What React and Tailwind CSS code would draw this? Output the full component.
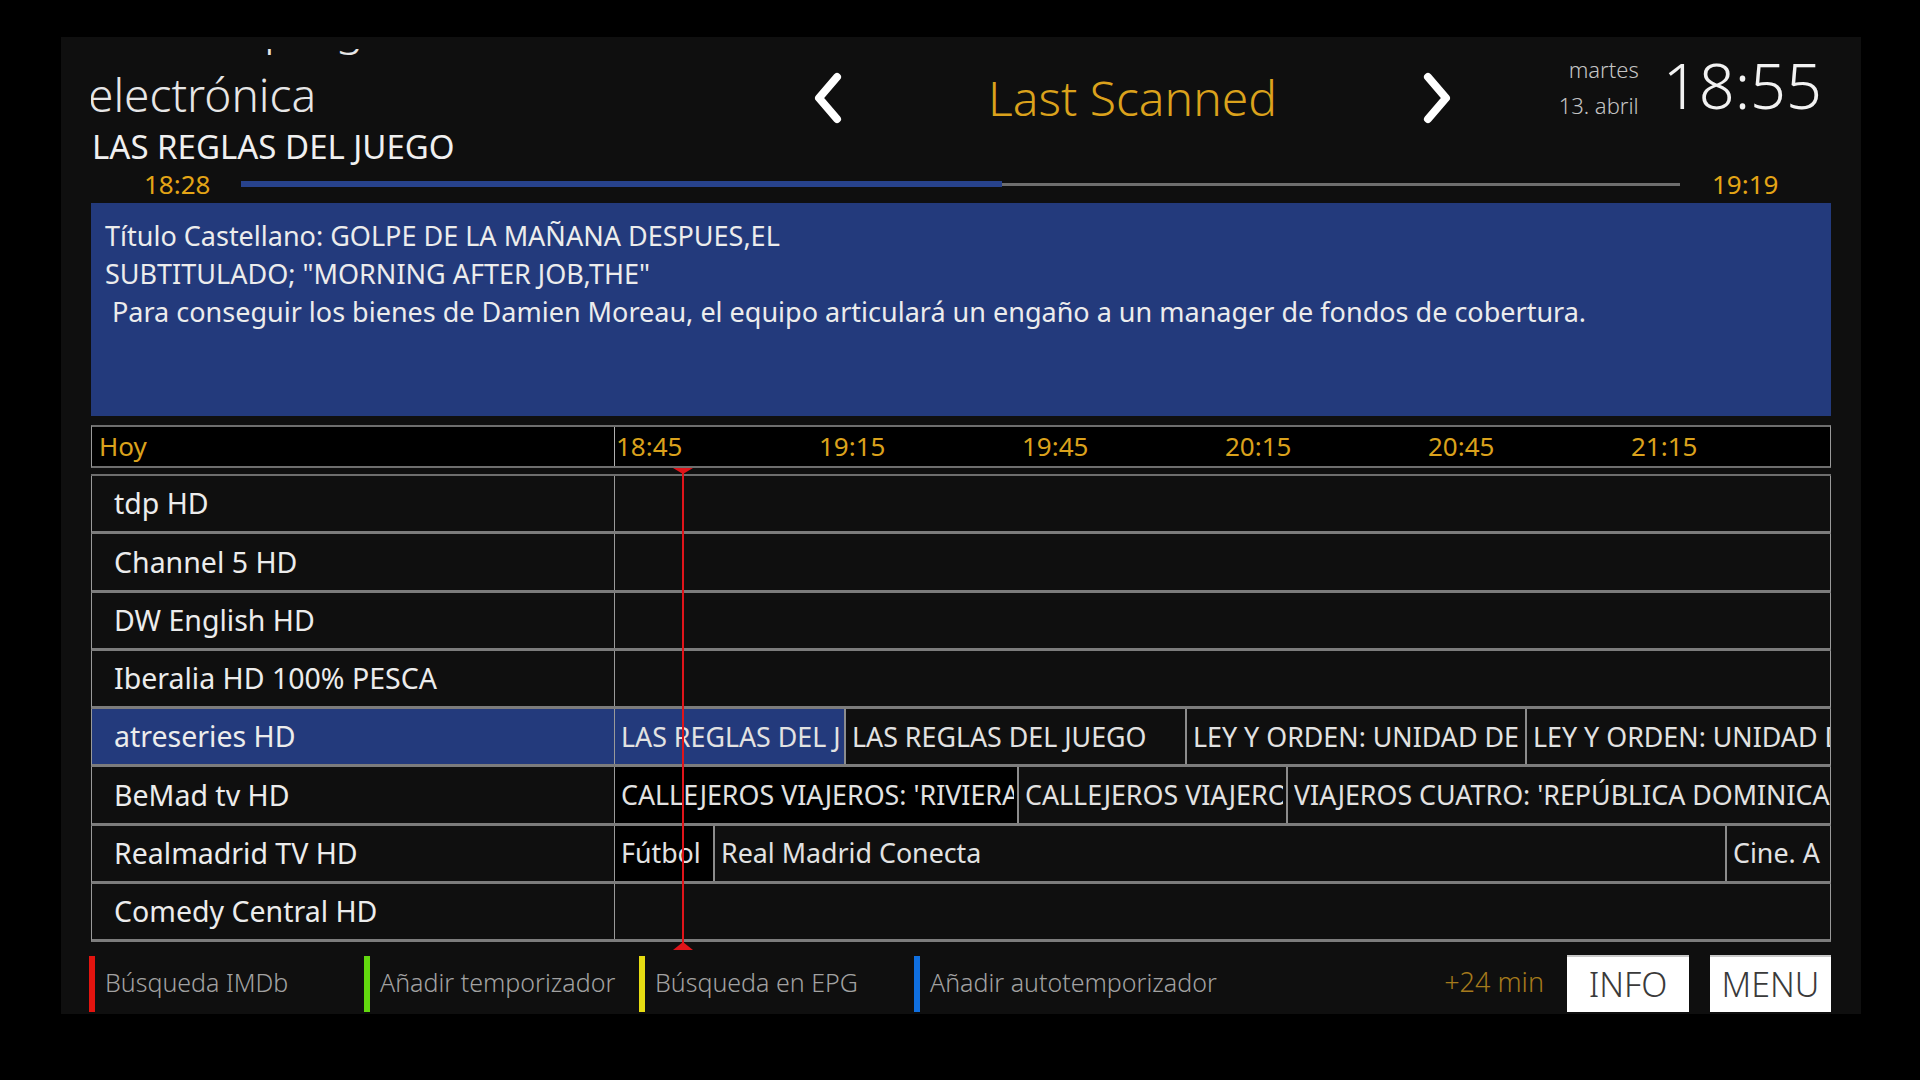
import React from 'react';

// EPG grid scale: 30 minutes per 203px column
const PX_PER_MIN = 203 / 30;

const slots = ['18:45', '19:15', '19:45', '20:15', '20:45', '21:15'];

const channels = [
  { name: 'tdp HD', programs: [] },
  { name: 'Channel 5 HD', programs: [] },
  { name: 'DW English HD', programs: [] },
  { name: 'Iberalia HD 100% PESCA', programs: [] },
  {
    name: 'atreseries HD',
    selected: true,
    programs: [
      { title: 'LAS REGLAS DEL JUEGO', min: 34.1, selected: true },
      { title: 'LAS REGLAS DEL JUEGO', min: 50.4 },
      { title: 'LEY Y ORDEN: UNIDAD DE VÍCTIMAS ESPECIALES', min: 50.2 },
      { title: 'LEY Y ORDEN: UNIDAD DE VÍCTIMAS ESPECIALES' },
    ],
  },
  {
    name: 'BeMad tv HD',
    programs: [
      { title: "CALLEJEROS VIAJEROS: 'RIVIERA MAYA'", min: 59.7, now: true },
      { title: 'CALLEJEROS VIAJEROS', min: 39.8 },
      { title: "VIAJEROS CUATRO: 'REPÚBLICA DOMINICANA'" },
    ],
  },
  {
    name: 'Realmadrid TV HD',
    programs: [
      { title: 'Fútbol', min: 14.8, now: true },
      { title: 'Real Madrid Conecta', min: 149.6 },
      { title: 'Cine. A' },
    ],
  },
  { name: 'Comedy Central HD', programs: [] },
];

const keys = [
  { color: 'bg-[#e3140f]', label: 'Búsqueda IMDb' },
  { color: 'bg-[#62d80e]', label: 'Añadir temporizador' },
  { color: 'bg-[#e6dc12]', label: 'Búsqueda en EPG' },
  { color: 'bg-[#0f6fe0]', label: 'Añadir autotemporizador' },
];

const Chevron = ({ dir }) => (
  <svg width="34" height="54" viewBox="0 0 34 54">
    <polyline
      points={dir === 'left' ? '26,6 8,27 26,48' : '8,6 26,27 8,48'}
      fill="none"
      stroke="#ffffff"
      strokeWidth="8"
      strokeLinecap="round"
      strokeLinejoin="round"
    />
  </svg>
);

const ProgramCell = ({ p }) => {
  const bg = p.selected ? 'bg-[#233a7c]' : p.now ? 'bg-black' : 'bg-[#0f0f0f]';
  return (
    <div
      className={`${bg} h-full shrink-0 border-r-2 border-[#8c8c8c] pl-[6px] pr-[3px] flex items-center last:flex-1 last:border-r-0 last:pr-[7px]`}
      style={p.min ? { width: Math.round(p.min * PX_PER_MIN) } : undefined}
    >
      <span className="block w-full overflow-hidden whitespace-nowrap text-[26.8px] text-[#e2e2e2]">{p.title}</span>
    </div>
  );
};

const ChannelRow = ({ ch }) => (
  <div className="h-[58.3px] flex border-b-[3px] border-[#7c7c7c] border-l border-l-[#9a9a9a] border-r border-r-[#9a9a9a]">
    <div
      className={`w-[523px] shrink-0 flex items-center pl-[22px] text-[28.5px] text-[#ececec] border-r border-[#9a9a9a] ${
        ch.selected ? 'bg-[#233a7c]' : 'bg-[#0f0f0f]'
      }`}
    >
      {ch.name}
    </div>
    <div className="flex-1 min-w-0 flex bg-[#0f0f0f] overflow-hidden">
      {ch.programs.map((p, i) => (
        <ProgramCell key={i} p={p} />
      ))}
    </div>
  </div>
);

export default function App() {
  return (
    <div className="w-full h-[1080px] bg-black pt-[37px] pl-[61px] font-['Noto_Sans','Open_Sans',sans-serif]">
      <div className="w-[1800px] h-[977px] bg-[#0f0f0f] px-[30px] flex flex-col">
        {/* title / navigation / clock */}
        <div className="h-[91px] flex items-start">
          <div className="w-[720px] shrink-0 mt-[12px] h-[79px] overflow-hidden flex flex-col justify-end pb-[8px] font-light text-[46px] text-[#e6e6e6]">
            <div className="leading-[84px] whitespace-nowrap">Guía de programación</div>
            <div className="leading-[52px] whitespace-nowrap -ml-[3px]">electrónica</div>
          </div>
          <div className="mt-[34px] shrink-0">
            <Chevron dir="left" />
          </div>
          <div className="w-[575px] shrink-0 mt-[37px] text-center text-[48px] leading-none font-light text-[#dba21c]">
            Last Scanned
          </div>
          <div className="mt-[34px] shrink-0">
            <Chevron dir="right" />
          </div>
          <div className="flex-1 flex justify-end items-start pr-[9px]">
            <div className="mt-[14px] flex flex-col items-end text-[22px] font-light text-[#c4c4c4] leading-[36px]">
              <span>martes</span>
              <span>13. abril</span>
            </div>
            <div className="ml-[24px] mt-[16px] text-[63px] leading-none font-light text-[#f2f2f2]">18:55</div>
          </div>
        </div>

        <div className="h-[37px] flex items-center text-[33px] leading-none text-[#f0f0f0] pl-[1px]">
          LAS REGLAS DEL JUEGO
        </div>

        {/* progress of current event */}
        <div className="h-[38px] flex items-center">
          <span className="w-[150px] shrink-0 pl-[53px] text-[26px] leading-none text-[#e4a516]">18:28</span>
          <div className="w-[1439px] shrink-0 flex items-center">
            <div className="w-[761px] h-[6px] bg-[#27428c]" />
            <div className="flex-1 h-[3px] bg-[#6e6e6e]" />
          </div>
          <span className="ml-[32px] text-[26px] leading-none text-[#e4a516]">19:19</span>
        </div>

        {/* event description */}
        <div className="h-[213px] bg-[#233a7c] px-[14px] pt-[14px] text-[27px] leading-[38px] text-[#ececec] whitespace-pre">
          <div>Título Castellano: GOLPE DE LA MAÑANA DESPUES,EL</div>
          <div>SUBTITULADO; "MORNING AFTER JOB,THE"</div>
          <div> Para conseguir los bienes de Damien Moreau, el equipo articulará un engaño a un manager de fondos de cobertura.</div>
        </div>

        {/* timeline + channels */}
        <div className="relative mt-[9px]">
          <div className="h-[43px] flex bg-black border-y-2 border-[#6e6e6e] border-l border-l-[#9a9a9a] border-r border-r-[#9a9a9a] text-[26px] text-[#dba21c]">
            <div className="w-[523px] shrink-0 pl-[7px] flex items-center border-r border-[#b0b0b0]">Hoy</div>
            <div className="flex-1 min-w-0 flex overflow-hidden">
              {slots.map((s) => (
                <div key={s} className="w-[203px] shrink-0 pl-[1px] flex items-center">
                  {s}
                </div>
              ))}
            </div>
          </div>

          <div className="mt-[6px] border-t-2 border-[#6e6e6e]">
            {channels.map((ch) => (
              <ChannelRow key={ch.name} ch={ch} />
            ))}
          </div>

          {/* now marker */}
          <div className="absolute left-[591px] top-[43px] h-[477px] w-[2px] bg-[#e0141a]" />
          <div className="absolute left-[582px] top-[43px] w-0 h-0 border-l-[10px] border-r-[10px] border-t-[6px] border-l-transparent border-r-transparent border-t-[#e0141a]" />
          <div className="absolute left-[582px] top-[517px] w-0 h-0 border-l-[10px] border-r-[10px] border-b-[8px] border-l-transparent border-r-transparent border-b-[#e0141a]" />
        </div>

        {/* colour keys */}
        <div className="mt-[14px] h-[56px] flex items-stretch -ml-[2px]">
          {keys.map((k) => (
            <div key={k.label} className="w-[275px] shrink-0 flex items-stretch">
              <div className={`w-[6px] shrink-0 ${k.color}`} />
              <span className="ml-[10px] pb-[4px] flex items-center text-[25px] font-light text-[#a2a2a2] whitespace-nowrap">
                {k.label}
              </span>
            </div>
          ))}
          <div className="flex-1 flex items-center justify-end">
            <span className="pb-[4px] text-[27px] font-light text-[#a57a1c] mr-[23px]">+24 min</span>
            <div className="w-[122px] shrink-0 h-[57px] -mt-[1px] bg-white border-t-2 border-[#c8c8c8] flex items-center justify-center text-[34px] font-light text-[#3a3a3a]">
              INFO
            </div>
            <div className="ml-[21px] w-[121px] shrink-0 h-[57px] -mt-[1px] bg-white border-t-2 border-[#c8c8c8] flex items-center justify-center text-[34px] font-light text-[#3a3a3a]">
              MENU
            </div>
          </div>
        </div>
      </div>
    </div>
  );
}
